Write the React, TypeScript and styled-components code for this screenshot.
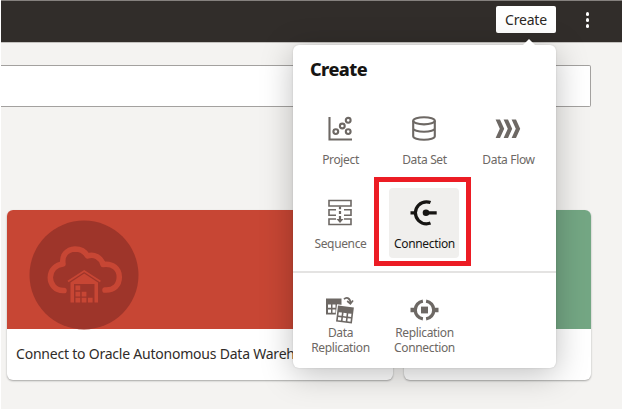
import React from "react";
import styled, { createGlobalStyle } from "styled-components";

const GlobalStyle = createGlobalStyle`
  * { box-sizing: border-box; }
  body {
    margin: 0;
    background: #fff;
    font-family: "Noto Sans", "Open Sans", sans-serif;
    overflow: hidden;
  }
`;

const Page = styled.div`
  position: relative;
  width: 622px;
  height: 414px;
  overflow: hidden;
  background: #fff;
`;

const Screen = styled.div`
  height: 409px;
  margin-left: 1px;
  background: #f4f3f1;
`;

const Header = styled.header`
  display: flex;
  justify-content: flex-end;
  align-items: flex-start;
  height: 43px;
  padding-top: 5px;
  background: #312d2a;
  border-top: 1px solid #85817e;
  border-bottom: 1px solid #c3c1be;
`;

const CreateButton = styled.button`
  width: 60px;
  height: 27px;
  margin-right: 25px;
  padding: 1px 0 0;
  border: 0;
  border-radius: 2px;
  background: #fff;
  color: #2b2724;
  font: 400 14px/26px "Noto Sans", sans-serif;
  letter-spacing: -0.2px;
`;

const Kebab = styled.div`
  display: flex;
  flex-direction: column;
  align-items: center;
  gap: 2.2px;
  width: 13px;
  margin-top: 6px;
  margin-right: 28px;
`;

const Dot = styled.span`
  width: 3.8px;
  height: 3.8px;
  border-radius: 50%;
  background: #fff;
`;

const SearchField = styled.div`
  width: 590px;
  height: 42px;
  margin-top: 22px;
  background: #fff;
  border: 1px solid #a3a19f;
  border-left: 0;
  border-radius: 0 2px 2px 0;
`;

const Cards = styled.div`
  display: grid;
  grid-template-columns: 386px 187px;
  gap: 11px;
  margin: 103px 0 0 6px;
`;

const Card = styled.article`
  height: 169.5px;
  overflow: hidden;
  border-radius: 6px;
  background: #fff;
  box-shadow: 0 1px 2px rgba(0, 0, 0, 0.32);
`;

const Banner = styled.div<{ $color: string }>`
  height: 119px;
  padding: 10px 0 0 22px;
  background: ${(p) => p.$color};
`;

const CardTitle = styled.div`
  max-width: 368px;
  padding: 15px 0 0 9px;
  color: #302c29;
  font-size: 14px;
  line-height: 20px;
  white-space: nowrap;
  letter-spacing: -0.22px;
`;

const Popup = styled.section`
  position: absolute;
  left: 293px;
  top: 45px;
  width: 262.5px;
  height: 322.5px;
  border-radius: 6px;
  background: #fff;
  box-shadow: 0 6px 32px rgba(0, 0, 0, 0.25), 0 0 2px rgba(0, 0, 0, 0.15);

  &::before {
    content: "";
    position: absolute;
    top: -6px;
    left: 230px;
    border: 6px solid transparent;
    border-top: 0;
    border-bottom-color: #fff;
  }
`;

const PopupTitle = styled.h2`
  height: 59px;
  margin: 0;
  padding: 12px 0 0 17px;
  color: #161513;
  font-size: 18px;
  font-weight: 800;
  line-height: 24px;
  letter-spacing: -0.55px;
`;

const TileGrid = styled.div<{ $footer?: boolean }>`
  display: grid;
  grid-template-columns: repeat(3, 70px);
  gap: 14px;
  height: ${(p) => (p.$footer ? "95px" : "167px")};
  padding: ${(p) => (p.$footer ? "12px" : "0")} 0 0 12px;
  align-content: start;
  border-top: ${(p) => (p.$footer ? "2px solid #e4e3e2" : "0")};
`;

const Tile = styled.div<{ $active?: boolean }>`
  position: relative;
  display: flex;
  flex-direction: column;
  align-items: center;
  height: 70px;
  padding-top: 10px;
  border-radius: 4px;
  background: ${(p) => (p.$active ? "#f0efed" : "transparent")};
  color: ${(p) => (p.$active ? "#161513" : "#6d6864")};

  svg { flex: none; }
`;

const Label = styled.span<{ $tight?: boolean }>`
  margin-top: ${(p) => (p.$tight ? "1px" : "9px")};
  padding-left: 1px;
  color: inherit;
  font-size: 12px;
  line-height: 14.5px;
  text-align: center;
  letter-spacing: -0.35px;
  white-space: pre-line;
`;

const Highlight = styled.div`
  position: absolute;
  left: -15px;
  top: -11px;
  width: 97px;
  height: 89px;
  border: 5px solid #ec1c24;
`;

const icon = { width: 30, height: 30, viewBox: "0 0 30 30", fill: "none", stroke: "currentColor" };

const ProjectIcon = () => (
  <svg {...icon} strokeWidth="2.1">
    <path d="M4.5 3v22.5H27" />
    <circle cx="10.8" cy="17.6" r="2.4" />
    <circle cx="17.3" cy="12" r="2.4" />
    <circle cx="23.2" cy="6.3" r="2.4" />
    <circle cx="23.2" cy="17.6" r="2.4" />
  </svg>
);

const DataSetIcon = () => (
  <svg {...icon} strokeWidth="2.1">
    <ellipse cx="15" cy="6.8" rx="10.8" ry="3.6" />
    <path d="M4.2 6.8v15.4c0 2 4.8 3.6 10.8 3.6s10.800-1.600 10.800-3.600V6.800M4.200 14.200c0 2 4.800 3.600 10.800 3.600s10.800-1.600 10.800-3.600" />
  </svg>
);

const DataFlowIcon = () => (
  <svg {...icon} fill="currentColor" stroke="none">
    {[2.6, 10.6, 18.6].map((x) => (
      <path key={x} transform={`translate(${x} 5.5)`} d="M0 0h4.4L8.6 9.300 4.400 18.600H0l4.200-9.300z" />
    ))}
  </svg>
);

const SequenceIcon = () => (
  <svg {...icon} strokeWidth="1.6">
    <path d="M4 2.500h22v5.500H4zM11 11.700H4v5.500h7M19 11.700h7v5.500h-7M11 21H4v5.500h22V21h-7" />
    <path d="M15 8.500v2.700M15 13v3M15 18v5" strokeWidth="2.200" />
    <path d="M11.500 21 15 25l3.500-4z" fill="currentColor" stroke="none" />
  </svg>
);

const ConnectionIcon = () => (
  <svg {...icon} strokeWidth="3.2">
    <path d="M21.500 4.500c-1-.400-2.500-.700-4.100-.700a11 11 0 0 0 0 22c1.600 0 3.100-.300 4.100-.700" />
    <path d="M1.500 14.800h5M16 14.800h11.700" />
    <circle cx="17" cy="14.800" r="3.300" fill="currentColor" stroke="none" />
  </svg>
);

const DataReplicationIcon = () => (
  <svg {...icon}>
    <rect x="1" y="3.500" width="15.500" height="16" fill="currentColor" stroke="none" />
    <path d="M3 9.500h3v3.200H3zM7.500 9.500h3v3.200h-3zM3 14.500h3v3.200H3zM7.500 14.500h3v3.200h-3z" fill="#fff" stroke="none" />
    <g transform="rotate(7 20 19)">
      <path d="M10.900 10.400h18.200v18.400H10.900z" fill="#fff" stroke="none" />
      <path d="M12 11.500h16v16H12z" fill="currentColor" stroke="none" />
      <path d="M13.600 18h3.200v3.200h-3.200zM18.400 18h3.200v3.200h-3.200zM23.200 18h3.200v3.200h-3.200zM13.600 22.800h3.200V26h-3.200zM18.400 22.800h3.200V26h-3.200zM23.200 22.800h3.200V26h-3.200z" fill="#fff" stroke="none" />
    </g>
    <path d="M19 4.300c2-2.300 6.200-2 6.500 3.700" strokeWidth="1.700" />
    <path d="m22.200 6 3.200 2.800L28 5.500" strokeWidth="1.700" />
  </svg>
);

const ReplicationConnectionIcon = () => (
  <svg {...icon} strokeWidth="3.300">
    <path d="M13.900 6.100a9 9 0 0 0 0 17.800M17.100 6.100a9 9 0 0 1 0 17.800" />
    <path d="M1.500 15h4M25.500 15h4" strokeWidth="4.500" />
    <path d="M12 11.600h7v6.800h-7z" fill="currentColor" stroke="none" />
  </svg>
);

const WarehouseBadge = () => (
  <svg width="110" height="110" viewBox="0 0 110 110">
    <circle cx="55" cy="55" r="54.500" fill="#9e352a" />
    <path
      d="M35 70.500C26 71 21.300 64 21.300 57.500C21.300 50 27 44.500 34 44C32.500 35 38 29.500 46 29C52 29 56 31.500 58.500 36C65 33.500 72 37.500 74 44.500C84 43 90.300 49 90.300 57C90.300 65 85 70.500 76 70"
      fill="none" stroke="#c74634" strokeWidth="5.500" strokeLinecap="round" strokeLinejoin="round"
    />
    <path d="m39 61.500 16.200-10.500 16.200 10.500" fill="none" stroke="#c74634" strokeWidth="1.800" />
    <path d="M41.500 62.500 55.200 53.500 69 62.500V82.500H65.500V64H45V82.500H41.500z" fill="#c74634" />
    <path d="M46.500 65.500h4.700v4.700h-4.700zM46.500 71.700h4.700v4.700h-4.700zM46.500 77.800h4.700v4.700h-4.700zM52.700 71.700h4.700v4.700h-4.700zM52.700 77.800h4.700v4.700h-4.700zM58.900 77.800h4.700v4.700h-4.700z" fill="#c74634" />
  </svg>
);

const mainTiles = [
  { label: "Project", Icon: ProjectIcon },
  { label: "Data Set", Icon: DataSetIcon },
  { label: "Data Flow", Icon: DataFlowIcon },
  { label: "Sequence", Icon: SequenceIcon },
  { label: "Connection", Icon: ConnectionIcon, active: true },
];

const replicationTiles = [
  { label: "Data\nReplication", Icon: DataReplicationIcon },
  { label: "Replication\nConnection", Icon: ReplicationConnectionIcon },
];

export default function App() {
  return (
    <Page>
      <GlobalStyle />
      <Screen>
        <Header>
          <CreateButton>Create</CreateButton>
          <Kebab><Dot /><Dot /><Dot /></Kebab>
        </Header>
        <SearchField />
        <Cards>
          <Card>
            <Banner $color="#c74634"><WarehouseBadge /></Banner>
            <CardTitle>Connect to Oracle Autonomous Data Warehouse</CardTitle>
          </Card>
          <Card><Banner $color="#74a784" /></Card>
        </Cards>
      </Screen>
      <Popup>
        <PopupTitle>Create</PopupTitle>
        <TileGrid>
          {mainTiles.map(({ label, Icon, active }) => (
            <Tile key={label} $active={active}>
              <Icon />
              <Label>{label}</Label>
              {active && <Highlight />}
            </Tile>
          ))}
        </TileGrid>
        <TileGrid $footer>
          {replicationTiles.map(({ label, Icon }) => (
            <Tile key={label}>
              <Icon />
              <Label $tight>{label}</Label>
            </Tile>
          ))}
        </TileGrid>
      </Popup>
    </Page>
  );
}
